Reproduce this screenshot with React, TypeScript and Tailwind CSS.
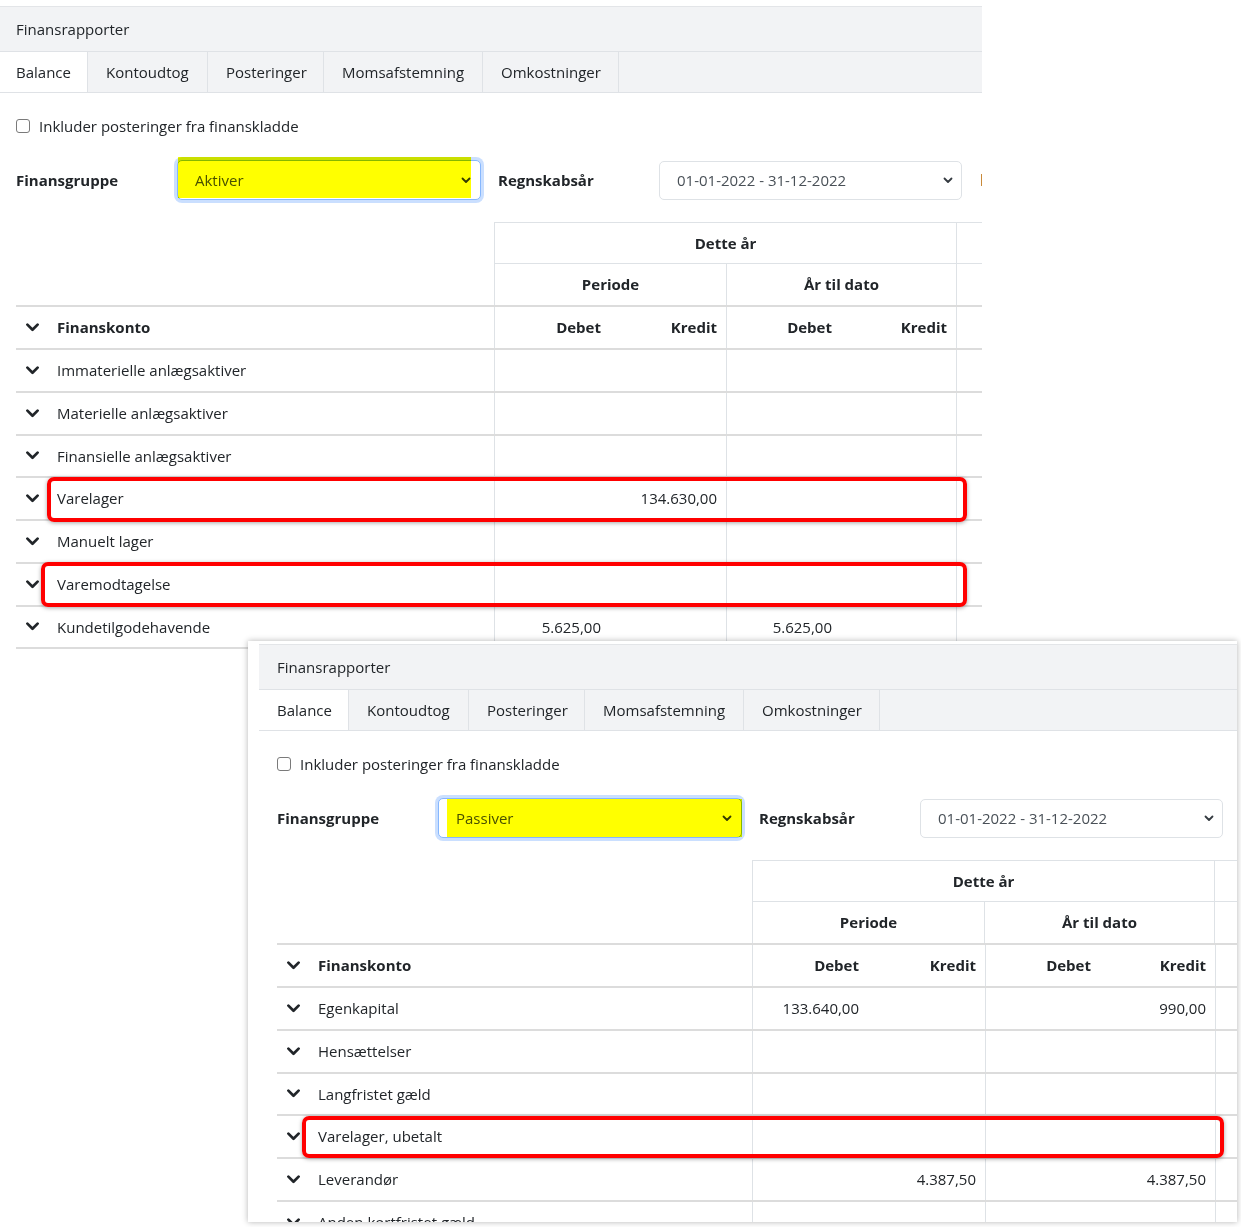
import clsx from 'clsx'

type Row = { label: string; pd?: string; pk?: string; ad?: string; ak?: string }

const tabs = [
  { label: 'Balance', w: 'w-[90px]' },
  { label: 'Kontoudtog', w: 'w-[120px]' },
  { label: 'Posteringer', w: 'w-[116px]' },
  { label: 'Momsafstemning', w: 'w-[159px]' },
  { label: 'Omkostninger', w: 'w-[136px]' },
]

const aktiver: Row[] = [
  { label: 'Immaterielle anlægsaktiver' },
  { label: 'Materielle anlægsaktiver' },
  { label: 'Finansielle anlægsaktiver' },
  { label: 'Varelager', pk: '134.630,00' },
  { label: 'Manuelt lager' },
  { label: 'Varemodtagelse' },
  { label: 'Kundetilgodehavende', pd: '5.625,00', ad: '5.625,00' },
]

const passiver: Row[] = [
  { label: 'Egenkapital', pd: '133.640,00', ak: '990,00' },
  { label: 'Hensættelser' },
  { label: 'Langfristet gæld' },
  { label: 'Varelager, ubetalt' },
  { label: 'Leverandør', pk: '4.387,50', ak: '4.387,50' },
  { label: 'Anden kortfristet gæld' },
]

function Chevron() {
  return (
    <svg width="13" height="9" viewBox="0 0 13 9" fill="none" className="shrink-0 text-[#212529]">
      <polyline points="1.4,1.6 6.5,6.8 11.6,1.6" stroke="currentColor" strokeWidth="2.7" strokeLinecap="round" strokeLinejoin="round" />
    </svg>
  )
}

function SmallChevron() {
  return (
    <svg width="10" height="7" viewBox="0 0 10 7" fill="none" className="text-[#343a40]">
      <polyline points="1.5,1.5 5,5 8.5,1.5" stroke="currentColor" strokeWidth="1.8" strokeLinecap="round" strokeLinejoin="round" />
    </svg>
  )
}

function Report({ group, rows, firstCol, pkCol }: { group: string; rows: Row[]; firstCol: string; pkCol: string }) {
  const num = 'flex items-center justify-end pr-[9px]'
  return (
    <div className="w-[1010px] bg-white text-[15px] text-[#212529]">
      <div className="flex h-[45px] items-center border-t border-[#e3e5e8] bg-[#f2f3f5] pl-[18px] font-medium">Finansrapporter</div>
      <div className="flex h-[42px] border-y border-[#dfe2e6] bg-[#f2f3f5]">
        {tabs.map((t, i) => (
          <div key={t.label} className={clsx('flex items-center border-r border-[#dfe2e6] pl-[18px]', t.w, i === 0 && 'bg-white')}>
            {t.label}
          </div>
        ))}
      </div>

      <div className="px-[18px]">
        <div className="mt-[22px] flex h-[22px] items-center">
          <span className="h-[14px] w-[14px] rounded-[3px] border border-[#7a7a7a] bg-white" />
          <span className="ml-[9px]">Inkluder posteringer fra finanskladde</span>
        </div>

        <div className="mt-[23px] flex h-[40px] items-center">
          <div className="w-[161px] font-bold">Finansgruppe</div>
          <div className="flex h-[40px] w-[304px] items-center justify-between rounded-[5px] border border-[#86b7fe] bg-white pl-[17px] pr-[9px] text-[#495057] shadow-[0_0_0_3px_rgba(13,110,253,0.22)]">
            <span>{group}</span>
            <SmallChevron />
          </div>
          <div className="ml-[17px] w-[161px] font-bold">Regnskabsår</div>
          <div className="flex h-[39px] w-[303px] items-center justify-between rounded-[5px] border border-[#dee2e6] bg-white pl-[17px] pr-[8px] text-[#495057]">
            <span>01-01-2022 - 31-12-2022</span>
            <SmallChevron />
          </div>
          <span className="ml-[19px] h-[12px] w-[2px] shrink-0 bg-[#c98a3a]" />
        </div>

        <div className="mt-[22px]">
          <div className="flex h-[41px]">
            <div className={firstCol} />
            <div className="flex w-[462px] items-center justify-center border-l border-t border-[#dee2e6] font-bold">Dette år</div>
            <div className="flex-1 border-l border-t border-[#dee2e6]" />
          </div>
          <div className="flex h-[42px]">
            <div className={firstCol} />
            <div className="flex w-[232px] items-center justify-center border-l border-t border-[#dee2e6] font-bold">Periode</div>
            <div className="flex w-[230px] items-center justify-center border-l border-t border-[#dee2e6] font-bold">År til dato</div>
            <div className="flex-1 border-l border-t border-[#dee2e6]" />
          </div>
          <div className="flex h-[43px] border-t-2 border-[#dcdcdc] font-bold">
            <div className={clsx('flex items-center pl-[10px]', firstCol)}>
              <Chevron />
              <span className="ml-[18px]">Finanskonto</span>
            </div>
            <div className={clsx('w-[116px] border-l border-[#dee2e6]', num)}>Debet</div>
            <div className={clsx(pkCol, num)}>Kredit</div>
            <div className={clsx('w-[115px] border-l border-[#dee2e6]', num)}>Debet</div>
            <div className={clsx('w-[115px]', num)}>Kredit</div>
            <div className="flex-1 border-l border-[#dee2e6]" />
          </div>
          {rows.map((r) => (
            <div key={r.label} className="flex h-[42.75px] border-t-2 border-[#dcdcdc]">
              <div className={clsx('flex items-center pl-[10px]', firstCol)}>
                <Chevron />
                <span className="ml-[18px]">{r.label}</span>
              </div>
              <div className={clsx('w-[116px] border-l border-[#dee2e6]', num)}>{r.pd}</div>
              <div className={clsx(pkCol, num)}>{r.pk}</div>
              <div className={clsx('w-[115px] border-l border-[#dee2e6]', num)}>{r.ad}</div>
              <div className={clsx('w-[115px]', num)}>{r.ak}</div>
              <div className="flex-1 border-l border-[#dee2e6]" />
            </div>
          ))}
          <div className="h-[2px] bg-[#dcdcdc]" />
        </div>
      </div>
    </div>
  )
}

export default function App() {
  return (
    <div className="relative h-[1227px] w-[1241px] overflow-hidden bg-white pt-[6px] font-['Segoe_UI','Open_Sans',sans-serif]">
      {/* first capture: Aktiver */}
      <div className="h-[644px] w-[982px] overflow-hidden">
        <div className="-ml-[2px]">
          <Report group="Aktiver" rows={aktiver} firstCol="w-[478px]" pkCol="w-[116px]" />
        </div>
      </div>

      {/* second capture: Passiver, pasted over the first */}
      <div className="absolute left-[248px] top-[641px] h-[581px] w-[989px] overflow-hidden bg-white pl-[11px] pt-[3px] shadow-[0_0_6px_rgba(0,0,0,0.3)]">
        <Report group="Passiver" rows={passiver} firstCol="w-[475px]" pkCol="w-[117px]" />
      </div>

      {/* highlighter marks */}
      <div className="absolute left-[178px] top-[157px] h-[41px] w-[293px] bg-[#ffff00] mix-blend-multiply" />
      <div className="absolute left-[447px] top-[799px] h-[38px] w-[295px] bg-[#ffff00] mix-blend-multiply" />

      {/* red boxes */}
      <div className="absolute left-[47px] top-[477px] h-[45px] w-[920px] rounded-[7px] border-4 border-[#ff0000] shadow-[0_1px_4px_rgba(0,0,0,0.35)]" />
      <div className="absolute left-[41px] top-[562px] h-[45px] w-[926px] rounded-[7px] border-4 border-[#ff0000] shadow-[0_1px_4px_rgba(0,0,0,0.35)]" />
      <div className="absolute left-[302px] top-[1116px] h-[42px] w-[922px] rounded-[7px] border-4 border-[#ff0000] shadow-[0_1px_4px_rgba(0,0,0,0.35)]" />
    </div>
  )
}
